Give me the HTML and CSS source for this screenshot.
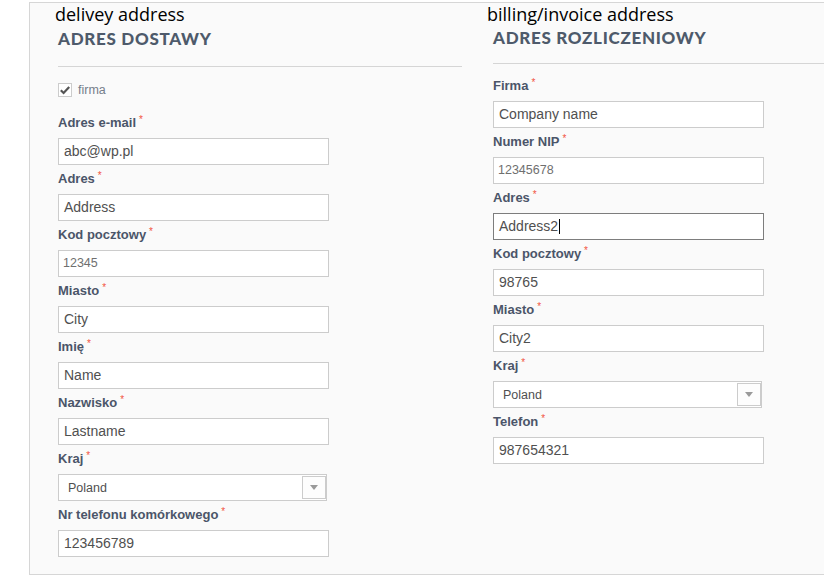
FILE: index.html
```html
<!DOCTYPE html>
<html lang="pl">
<head>
<meta charset="utf-8">
<title>Adresy</title>
<link rel="stylesheet" href="styles.css">
</head>
<body>
<div class="panel">
  <section class="col col-left">
    <div class="annot annot-left">delivey address</div>
    <h2 class="title title-left">Adres dostawy</h2>
    <div class="rule rule-left"></div>
    <label class="check-row">
      <span class="checkbox"><svg width="12" height="12" viewBox="0 0 12 12"><path d="M1.8 6.2 L4.6 9 L10.2 3" fill="none" stroke="#555" stroke-width="2.2"/></svg></span>
      <span class="check-text">firma</span>
    </label>
    <div class="field"><div class="label">Adres e-mail<span class="req">*</span></div><div class="box">abc@wp.pl</div></div>
    <div class="field"><div class="label">Adres<span class="req">*</span></div><div class="box">Address</div></div>
    <div class="field"><div class="label">Kod pocztowy<span class="req">*</span></div><div class="box num">12345</div></div>
    <div class="field"><div class="label">Miasto<span class="req">*</span></div><div class="box">City</div></div>
    <div class="field"><div class="label">Imię<span class="req">*</span></div><div class="box">Name</div></div>
    <div class="field"><div class="label">Nazwisko<span class="req">*</span></div><div class="box">Lastname</div></div>
    <div class="field"><div class="label">Kraj<span class="req">*</span></div><div class="select"><span>Poland</span><span class="arrow"><span class="tri"></span></span></div></div>
    <div class="field"><div class="label">Nr telefonu komórkowego<span class="req">*</span></div><div class="box">123456789</div></div>
  </section>
  <section class="col col-right">
    <div class="annot annot-right">billing/invoice address</div>
    <h2 class="title title-right">Adres rozliczeniowy</h2>
    <div class="rule rule-right"></div>
    <div class="fields-right">
      <div class="field"><div class="label">Firma<span class="req">*</span></div><div class="box">Company name</div></div>
      <div class="field"><div class="label">Numer NIP<span class="req">*</span></div><div class="box num">12345678</div></div>
      <div class="field"><div class="label">Adres<span class="req">*</span></div><div class="box focused">Address2<span class="caret"></span></div></div>
      <div class="field"><div class="label">Kod pocztowy<span class="req">*</span></div><div class="box">98765</div></div>
      <div class="field"><div class="label">Miasto<span class="req">*</span></div><div class="box">City2</div></div>
      <div class="field"><div class="label">Kraj<span class="req">*</span></div><div class="select"><span>Poland</span><span class="arrow"><span class="tri"></span></span></div></div>
      <div class="field"><div class="label">Telefon<span class="req">*</span></div><div class="box">987654321</div></div>
    </div>
  </section>
</div>
</body>
</html>
```

FILE: styles.css
```css
html, body {
  margin: 0;
  padding: 0;
  background: #ffffff;
  width: 824px;
  height: 578px;
  overflow: hidden;
}

.panel {
  margin: 2px 0 0 29px;
  width: 880px;
  height: 571px;
  border: 1px solid #d6d6d6;
  background: #fafafa;
  display: flex;
  gap: 31px;
  padding-left: 28px;
  box-sizing: content-box;
}

.col {
  width: 404px;
  flex: none;
  font-family: "Liberation Sans", Arial, sans-serif;
}

.annot {
  font-family: "Open Sans", sans-serif;
  font-size: 18px;
  line-height: 22px;
  color: #000;
}
.annot-left { margin-left: -3px; }
.annot-right { margin-left: -6px; }

.title {
  margin: 0;
  font-family: Lato, sans-serif;
  font-weight: 900;
  font-size: 17px;
  line-height: 20px;
  letter-spacing: 0.7px;
  text-transform: uppercase;
  color: #4e5a6b;
}
.title-left { margin-top: 4px; }
.title-right { margin-top: 3px; }

.rule {
  height: 1px;
  background: #d5d5d5;
}
.rule-left { margin-top: 17px; width: 404px; }
.rule-right { margin-top: 15px; width: 404px; }

.check-row {
  display: flex;
  align-items: center;
  gap: 6px;
  height: 14px;
  margin: 16px 0 12px;
}
.checkbox {
  width: 14px;
  height: 14px;
  box-sizing: border-box;
  border: 1px solid #cccccc;
  background: #fff;
  display: flex;
  align-items: center;
  justify-content: center;
}
.checkbox svg { display: block; }
.check-text {
  font-size: 12.5px;
  color: #767e8b;
}

.fields-right { margin-top: 8px; }

.label {
  padding-top: 6px;
  height: 16px;
  line-height: 16px;
  margin-bottom: 7px;
  font-size: 13px;
  font-weight: bold;
  color: #4b5569;
}
.req {
  color: #f2553f;
  font-size: 10px;
  line-height: 0;
  font-weight: normal;
  vertical-align: 4px;
  margin-left: 3px;
}

.box {
  width: 271px;
  height: 27px;
  box-sizing: border-box;
  border: 1px solid #cccccc;
  background: #ffffff;
  padding-left: 5px;
  font-size: 14px;
  line-height: 25px;
  color: #505050;
  white-space: nowrap;
}
.box.num {
  font-size: 12.5px;
  color: #6f6f6f;
  padding-left: 4px;
}
.box.focused {
  border-color: #7d7d7d;
}
.caret {
  display: inline-block;
  width: 1px;
  height: 15px;
  background: #000;
  vertical-align: -3px;
  margin-left: 1px;
}

.select {
  width: 269px;
  height: 27px;
  box-sizing: border-box;
  border: 1px solid #cccccc;
  background: #ffffff;
  display: flex;
  align-items: center;
  justify-content: space-between;
  padding-left: 9px;
  font-size: 12.5px;
  color: #505050;
}
.arrow {
  width: 24px;
  height: 23px;
  box-sizing: border-box;
  border: 1px solid #cccccc;
  background: #fdfdfd;
  display: flex;
  align-items: center;
  justify-content: center;
}
.tri {
  width: 0;
  height: 0;
  border-left: 4.5px solid transparent;
  border-right: 4.5px solid transparent;
  border-top: 5px solid #9a9a9a;
}
```
